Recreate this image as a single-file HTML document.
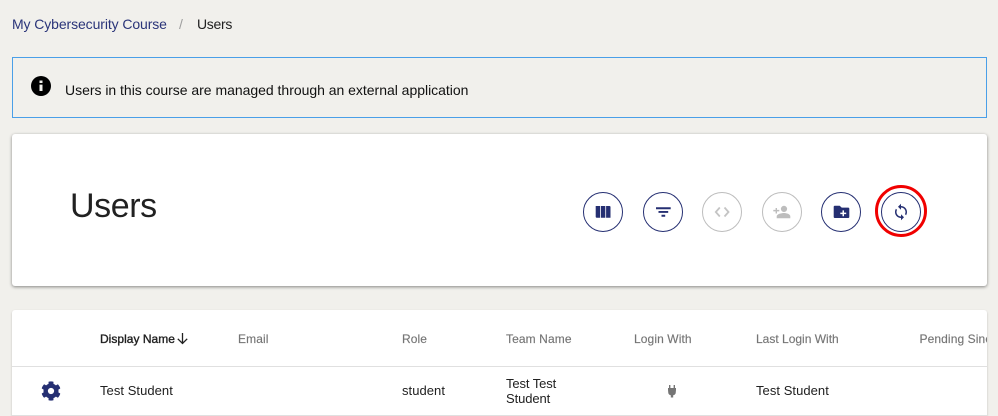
<!DOCTYPE html>
<html>
<head>
<meta charset="utf-8">
<style>
html,body{margin:0;padding:0;width:998px;height:416px;overflow:hidden;background:#f1f0ec;font-family:"Liberation Sans",sans-serif;color:#212121}
.t{position:absolute;white-space:nowrap;font-size:14px;line-height:16px}
.hd{font-size:12px;color:#757575;font-weight:400;top:331px;letter-spacing:.1px;-webkit-text-stroke:.15px #757575}
.circ{position:absolute;top:192px;width:38px;height:38px;border:1px solid #252f72;border-radius:50%;display:flex;align-items:center;justify-content:center;background:#fff}
.dis{border-color:#bdbdbd}
svg{display:block}
</style>
</head>
<body>
<div class="t" style="left:12px;top:16px;color:#2a3479;letter-spacing:-.1px">My Cybersecurity Course</div>
<div class="t" style="left:179px;top:16px;color:#9e9e9e">/</div>
<div class="t" style="left:197px;top:16px;color:#212121;letter-spacing:-.3px">Users</div>

<div style="position:absolute;left:12px;top:57px;width:973px;height:59px;border:1px solid #4a9fe8"></div>
<svg style="position:absolute;left:29px;top:74px" width="24" height="24" viewBox="0 0 24 24"><path fill="#000" d="M12 2a10 10 0 1 0 0 20 10 10 0 0 0 0-20zm1.500 15h-3v-6.400h3V17zm0-8h-3V6.500h3V9z"/></svg>
<div class="t" style="left:65px;top:82px;color:#111;letter-spacing:-.02px">Users in this course are managed through an external application</div>

<div style="position:absolute;left:12px;top:134px;width:975px;height:152px;background:#fff;border-radius:3px;box-shadow:0 1px 3px rgba(0,0,0,.45)"></div>
<div class="t" style="left:70px;top:186px;font-size:34px;line-height:40px;color:#212121;letter-spacing:-.4px">Users</div>

<div class="circ" style="left:583px"><svg width="24" height="24" viewBox="0 0 24 24"><path fill="#252f72" d="M4.700 6h4.400v11.800H5.700a1 1 0 0 1-1-1zM9.900 6h4.400v11.800H9.900zM15.100 6h3.400a1 1 0 0 1 1 1v10.800h-4.400z"/></svg></div>
<div class="circ" style="left:643px"><svg width="24" height="24" viewBox="0 0 24 24"><path fill="#252f72" d="M5 7.200h14.700v2H5zM7.500 11h9.700v1.900H7.500zM10.500 14.800h3.700v2h-3.700z"/></svg></div>
<div class="circ dis" style="left:702px"><svg width="24" height="24" viewBox="0 0 24 24"><path fill="none" stroke="#c4c4c4" stroke-width="1.800" d="M9.800 7.500L5.800 12l4 4.500M14.500 7.500l4 4.500-4 4.500"/></svg></div>
<div class="circ dis" style="left:762px"><svg width="24" height="24" viewBox="0 0 24 24"><path fill="#bdbdbd" d="M14 12a3.100 3.100 0 1 0 0-6.200 3.100 3.100 0 0 0 0 6.200zM14 13c-2.300 0-7.300 1-7.300 3.300v2H20.300v-2C20.300 14 16.300 13 14 13zM7 9.900V8H5.600v1.900H3.300v1.500h2.300v2.100H7v-2.100h2.300V9.900z"/></svg></div>
<div class="circ" style="left:821px"><svg width="24" height="24" viewBox="0 0 24 24"><path fill="#252f72" d="M5.700 5.700h5l2 1.900h6.600a1 1 0 0 1 1 1V17a1 1 0 0 1-1 1H5.700a1 1 0 0 1-1-1V6.700a1 1 0 0 1 1-1z"/><path fill="#fff" d="M13.500 10.400h1.500v2.200h2.200v1.500H15v2.200h-1.500v-2.200h-2.200v-1.500h2.200z"/></svg></div>
<div style="position:absolute;left:875px;top:185px;width:46px;height:46px;border:3px solid #f00000;border-radius:50%;background:#fff"></div>
<div class="circ" style="left:881px;top:192px"><svg width="18" height="18" viewBox="0 0 24 24"><path fill="#252f72" d="M12 4V1L8 5l4 4V6c3.310 0 6 2.690 6 6 0 1.010-.25 1.970-.7 2.800l1.460 1.460C19.540 15.030 20 13.570 20 12c0-4.420-3.580-8-8-8zm0 14c-3.310 0-6-2.690-6-6 0-1.010.25-1.970.7-2.800L5.240 7.740C4.460 8.970 4 10.430 4 12c0 4.420 3.580 8 8 8v3l4-4-4-4v3z"/></svg></div>

<div style="position:absolute;left:12px;top:310px;width:975px;height:106px;background:#fff;border-radius:3px 3px 0 0;overflow:hidden;box-shadow:0 1px 2px rgba(0,0,0,.2)">
  <div style="position:absolute;left:0;top:56px;width:975px;height:1px;background:#e0e0e0"></div>
  <div style="position:absolute;left:0;top:105px;width:975px;height:1px;background:#e0e0e0"></div>
  <div class="t hd" style="left:907.500px;top:21px">Pending Since</div>
</div>

<div class="t hd" style="left:100px;color:#212121;font-weight:400;letter-spacing:.02px;-webkit-text-stroke:.35px #212121">Display Name</div>
<svg style="position:absolute;left:176px;top:332px" width="13" height="13" viewBox="0 0 13 13"><path fill="none" stroke="#212121" stroke-width="1.300" d="M6.500 1v10.500M1.800 6.800l4.700 4.700 4.700-4.700"/></svg>
<div class="t hd" style="left:238px">Email</div>
<div class="t hd" style="left:402px">Role</div>
<div class="t hd" style="left:506px">Team Name</div>
<div class="t hd" style="left:634px">Login With</div>
<div class="t hd" style="left:756px;letter-spacing:0">Last Login With</div>

<svg style="position:absolute;left:40.500px;top:381px" width="20" height="20" viewBox="0 0 512 512"><path fill="#252f72" d="M487 316l-42-24a190 190 0 0 0 0-72l42-24c5-3 7-9 5-14-11-35-29-66-54-93-4-4-10-5-14-2l-42 24a187 187 0 0 0-63-36V27c0-6-4-10-9-11a201 201 0 0 0-108 0c-5 1-9 5-9 11v48a187 187 0 0 0-63 36L88 87c-5-3-11-2-14 2-25 27-43 58-54 93-2 5 0 11 5 14l42 24a190 190 0 0 0 0 72l-42 24c-5 3-7 9-5 14 11 35 29 66 54 93 4 4 10 5 14 2l42-24c18 16 40 28 63 36v48c0 6 4 10 9 11 36 8 73 8 108 0 5-1 9-5 9-11v-48c23-8 45-20 63-36l42 24c5 3 11 2 14-2 25-27 43-58 54-93 2-5 0-11-5-14zM256 336a80 80 0 1 1 0-160 80 80 0 0 1 0 160z"/></svg>

<div class="t" style="left:100px;top:383px;font-size:13px;letter-spacing:.05px">Test Student</div>
<div class="t" style="left:402px;top:383px;font-size:13px;letter-spacing:.05px">student</div>
<div class="t" style="left:506px;top:376px;font-size:13px;line-height:15px;white-space:normal;width:70px;letter-spacing:-.1px">Test Test Student</div>
<svg style="position:absolute;left:666px;top:385px" width="12" height="13" viewBox="0 0 12 13"><path fill="#757575" d="M3 0h1.400v3H7.600V0H9v3h1v2L9.700 8C9.500 9.200 8.500 10 7.200 10.200V12.500H4.800v-2.300C3.500 10 2.500 9.200 2.300 8L2 5V3h1z"/></svg>
<div class="t" style="left:756px;top:383px;font-size:13px;letter-spacing:.05px">Test Student</div>
</body>
</html>
